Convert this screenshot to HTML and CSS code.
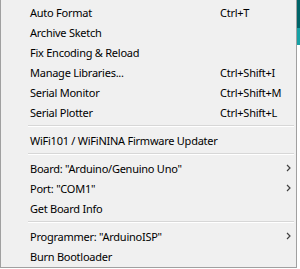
FILE: index.html
```html
<!DOCTYPE html>
<html lang="en">
<head>
<meta charset="UTF-8">
<meta name="viewport" content="width=device-width, initial-scale=1.0">
<title>Tools Menu</title>
<link rel="stylesheet" href="styles.css">
</head>
<body>

<div class="screen">
  <ul class="menu">
    <li class="menu-item"><span class="label">Auto Format</span><span class="key">Ctrl+T</span></li>
    <li class="menu-item"><span class="label">Archive Sketch</span></li>
    <li class="menu-item"><span class="label">Fix Encoding &amp; Reload</span></li>
    <li class="menu-item"><span class="label">Manage Libraries...</span><span class="key">Ctrl+Shift+I</span></li>
    <li class="menu-item"><span class="label">Serial Monitor</span><span class="key">Ctrl+Shift+M</span></li>
    <li class="menu-item"><span class="label">Serial Plotter</span><span class="key">Ctrl+Shift+L</span></li>
    <li class="separator"></li>
    <li class="menu-item"><span class="label">WiFi101 / WiFiNINA Firmware Updater</span></li>
    <li class="separator"></li>
    <li class="menu-item"><span class="label">Board: "Arduino/Genuino Uno"</span><span class="arrow"><svg width="5" height="8" viewBox="0 0 5 8"><path d="M1 1 L4 4 L1 7" fill="none" stroke="#404040" stroke-width="1.2"/></svg></span></li>
    <li class="menu-item"><span class="label">Port: "COM1"</span><span class="arrow"><svg width="5" height="8" viewBox="0 0 5 8"><path d="M1 1 L4 4 L1 7" fill="none" stroke="#404040" stroke-width="1.2"/></svg></span></li>
    <li class="menu-item"><span class="label">Get Board Info</span></li>
    <li class="separator"></li>
    <li class="menu-item"><span class="label">Programmer: "ArduinoISP"</span><span class="arrow"><svg width="5" height="8" viewBox="0 0 5 8"><path d="M1 1 L4 4 L1 7" fill="none" stroke="#404040" stroke-width="1.2"/></svg></span></li>
    <li class="menu-item"><span class="label">Burn Bootloader</span></li>
  </ul>
  <div class="edge">
    <div class="edge-dark"></div>
    <div class="edge-light"></div>
  </div>
</div>

</body>
</html>
```

FILE: styles.css
```css
body {
  margin: 0;
  padding: 0;
  background-color: #ffffff;
  font-family: "Noto Sans", "DejaVu Sans", sans-serif;
}
.screen {
  display: flex;
  width: 300px;
  height: 269px;
}
.menu {
  list-style-type: none;
  margin: 0;
  padding: 2px 0 0 0;
  width: 297px;
  height: 268px;
  box-sizing: border-box;
  background-color: #f0f0f0;
  border-left: 1px solid #a0a0a0;
  border-right: 1px solid #a0a0a0;
  border-bottom: 1px solid #a0a0a0;
}
.menu-item {
  display: grid;
  grid-template-columns: 190px 1fr;
  align-items: center;
  height: 20px;
  padding-left: 29px;
  padding-right: 5px;
  font-size: 11px;
  letter-spacing: -0.25px;
  color: #000000;
  white-space: nowrap;
}
.label {
  overflow: visible;
}
.arrow {
  display: flex;
  justify-content: flex-end;
  align-items: center;
}
.arrow svg {
  display: block;
}
.separator {
  height: 8px;
  margin-left: 27px;
  margin-right: 2px;
  display: flex;
  align-items: center;
}
.separator::before {
  content: "";
  display: block;
  width: 100%;
  height: 1px;
  background-color: #d7d7d7;
  border-bottom: 1px solid #ffffff;
}
.edge {
  display: flex;
  flex-direction: column;
  width: 3px;
}
.edge-dark {
  height: 28px;
  background-color: #006468;
}
.edge-light {
  height: 17px;
  background-color: #17a1a5;
}
```
